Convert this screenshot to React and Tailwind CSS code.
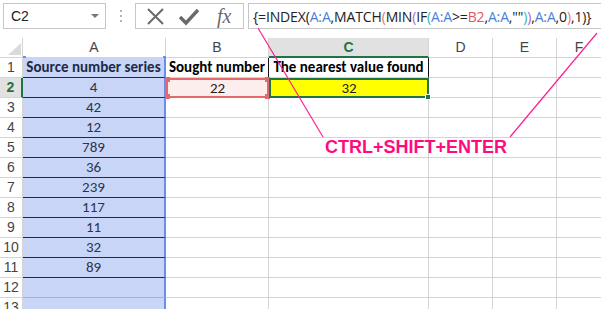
import React from 'react';

const GRID = 'border-[#d4d4d4]';
const CELL_FONT = "font-['Carlito','Lato',sans-serif]";

const formula = [
  ['{=INDEX(', 'text-[#222]'],
  ['A:A', 'text-[#4a7fd6]'],
  [',MATCH', 'text-[#222]'],
  ['(', 'text-[#f0707a]'],
  ['MIN', 'text-[#222]'],
  ['(', 'text-[#a06ad0]'],
  ['IF', 'text-[#222]'],
  ['(', 'text-[#3cb4a4]'],
  ['A:A', 'text-[#4a7fd6]'],
  ['>=', 'text-[#222]'],
  ['B2', 'text-[#e8545a]'],
  [',', 'text-[#222]'],
  ['A:A', 'text-[#4a7fd6]'],
  [',""', 'text-[#222]'],
  [')', 'text-[#3cb4a4]'],
  [')', 'text-[#a06ad0]'],
  [',', 'text-[#222]'],
  ['A:A', 'text-[#4a7fd6]'],
  [',0', 'text-[#222]'],
  [')', 'text-[#f0707a]'],
  [',1)}', 'text-[#222]'],
];

const series = ['4', '42', '12', '789', '36', '239', '117', '11', '32', '89', '', ''];

const Toolbar = () => (
  <div className="flex h-[38px] items-start pt-[3px] pl-[3px] font-['Liberation_Sans',sans-serif]">
    {/* Name box */}
    <div className="flex h-[26px] w-[103px] items-center justify-between border border-[#c6c6c6] pl-[7px] pr-[6px] text-[14px] text-[#222]">
      <span>C2</span>
      <span className="h-0 w-0 border-x-[4px] border-t-[4px] border-x-transparent border-t-[#777]" />
    </div>
    {/* Dots */}
    <div className="flex h-[26px] w-[29px] flex-col items-center justify-center gap-[3px]">
      <span className="h-[2px] w-[2px] bg-[#b5b5b5]" />
      <span className="h-[2px] w-[2px] bg-[#b5b5b5]" />
      <span className="h-[2px] w-[2px] bg-[#b5b5b5]" />
    </div>
    {/* Cancel / enter / fx */}
    <div className="flex h-[26px] w-[109px] items-center border border-[#c6c6c6]">
      <svg width="40" height="24" viewBox="0 0 40 24" className="shrink-0">
        <path d="M12 5 L27 20 M27 5 L12 20" stroke="#6a6a6a" strokeWidth="2" fill="none" />
      </svg>
      <svg width="34" height="24" viewBox="0 0 34 24" className="shrink-0">
        <path d="M4 13 L10 19 L22 6" stroke="#6a6a6a" strokeWidth="3.4" fill="none" strokeLinejoin="miter" />
      </svg>
      <span className="pl-[7px] font-['Liberation_Serif',serif] text-[20px] italic leading-none text-[#6a6a6a]">
        fx
      </span>
    </div>
    {/* Formula input */}
    <div className="ml-[4px] flex h-[26px] flex-1 items-center overflow-hidden border-y border-l border-[#c6c6c6] pl-[4px] font-['Open_Sans',sans-serif] text-[14px] tracking-[-0.15px] whitespace-nowrap">
      {formula.map(([t, c], i) => (
        <span key={i} className={c}>
          {t}
        </span>
      ))}
    </div>
  </div>
);

const Sheet = () => (
  <div className={`grid grid-cols-[23px_143px_103px_160px_64px_64px_1fr] auto-rows-[20px] text-[#333] ${CELL_FONT}`}>
    {/* Header row */}
    <div className={`relative border-r border-b ${GRID}`}>
      <svg width="23" height="20" className="absolute inset-0">
        <path d="M8 17 L21 17 L21 5 Z" fill="#dadada" />
      </svg>
    </div>
    <div className={`relative flex items-center justify-center border-r border-b ${GRID} font-['Liberation_Sans',sans-serif] text-[14px] text-[#444]`}>
      A
      <span className="absolute bottom-[-1px] left-0 h-[2px] w-[3px] bg-[#6d8ee8]" />
      <span className="absolute bottom-[-1px] right-[-1px] h-[2px] w-[3px] bg-[#6d8ee8]" />
    </div>
    <div className={`flex items-center justify-center border-r border-b ${GRID} font-['Liberation_Sans',sans-serif] text-[14px] text-[#444]`}>B</div>
    <div className="flex items-center justify-center border-r border-b-2 border-r-[#d4d4d4] border-b-[#217346] bg-[#e1e1e1] font-['Liberation_Sans',sans-serif] text-[14px] font-bold text-[#217346]">C</div>
    <div className={`flex items-center justify-center border-r border-b ${GRID} font-['Liberation_Sans',sans-serif] text-[14px] text-[#444]`}>D</div>
    <div className={`flex items-center justify-center border-r border-b ${GRID} font-['Liberation_Sans',sans-serif] text-[14px] text-[#444]`}>E</div>
    <div className={`flex items-center justify-center border-b ${GRID} font-['Liberation_Sans',sans-serif] text-[14px] text-[#444]`}>F</div>

    {/* Row 1: column titles */}
    <div className={`flex items-center justify-center border-r border-b ${GRID} font-['Liberation_Sans',sans-serif] text-[14px] text-[#444]`}>1</div>
    <div className="flex items-center justify-center border-r-2 border-b border-r-[#6d8ee8] border-b-[#1f2a48] bg-[#c8d5f6] text-[15px] font-bold text-[#1f2a48]">
      Source number series
    </div>
    <div className="flex items-center justify-center border-r border-b border-r-[#111] border-b-[#d4d4d4] text-[15px] font-bold text-black">
      Sought number
    </div>
    <div className="flex items-center justify-center border-r border-b border-r-[#111] border-b-[#d4d4d4] text-[15px] font-bold text-black">
      The nearest value found
    </div>
    <div className={`border-r border-b ${GRID}`} />
    <div className={`border-r border-b ${GRID}`} />
    <div className={`border-b ${GRID}`} />

    {series.map((v, i) => {
      const row = i + 2;
      return (
        <React.Fragment key={row}>
          <div
            className={
              row === 2
                ? "flex items-center justify-center border-r-2 border-b border-r-[#217346] border-b-[#d4d4d4] bg-[#e1e1e1] font-['Liberation_Sans',sans-serif] text-[14px] font-bold text-[#217346]"
                : `flex items-center justify-center border-r border-b ${GRID} font-['Liberation_Sans',sans-serif] text-[14px] text-[#444]`
            }
          >
            {row}
          </div>
          <div
            className={`flex items-center justify-center border-r-2 border-b border-r-[#6d8ee8] bg-[#c8d5f6] text-[15px] text-[#2a3350] ${
              row <= 11 ? 'border-b-[#1f2a48]' : 'border-b-[#a9b2cc]'
            }`}
          >
            {v}
          </div>
          {row === 2 ? (
            <>
              <div className="relative flex items-center justify-center border-2 border-[#e46a6a] bg-[#fdeeee] text-[15px] text-[#222]">
                22
                <span className="absolute left-[-3px] top-[-3px] h-[5px] w-[5px] bg-[#e46a6a]" />
                <span className="absolute right-[-3px] top-[-3px] h-[5px] w-[5px] bg-[#e46a6a]" />
                <span className="absolute bottom-[-3px] left-[-3px] h-[5px] w-[5px] bg-[#e46a6a]" />
                <span className="absolute bottom-[-3px] right-[-3px] h-[5px] w-[5px] bg-[#e46a6a]" />
              </div>
              <div className="relative flex items-center justify-center border-2 border-[#217346] bg-[#ffff00] text-[15px] text-[#222]">
                32
                <span className="absolute bottom-[-4px] right-[-4px] h-[6px] w-[6px] border border-white bg-[#217346]" />
              </div>
            </>
          ) : (
            <>
              <div className={`border-r border-b ${GRID}`} />
              <div className={`border-r border-b ${GRID}`} />
            </>
          )}
          <div className={`border-r border-b ${GRID}`} />
          <div className={`border-r border-b ${GRID}`} />
          <div className={`border-b ${GRID}`} />
        </React.Fragment>
      );
    })}
  </div>
);

export default function App() {
  return (
    <div className="relative h-[309px] w-[601px] overflow-hidden bg-white">
      <Toolbar />
      <Sheet />

      {/* Annotation callout */}
      <svg width="601" height="309" className="pointer-events-none absolute inset-0">
        <line x1="258" y1="28" x2="323" y2="137" stroke="#ff1f8f" strokeWidth="1.2" />
        <line x1="597" y1="33" x2="510" y2="137" stroke="#ff1f8f" strokeWidth="1.2" />
      </svg>
      <div className="absolute left-[325px] top-[136px] font-['Liberation_Sans',sans-serif] text-[18px] font-bold leading-[22px] text-[#ff0a80]">
        CTRL+SHIFT+ENTER
      </div>
    </div>
  );
}
